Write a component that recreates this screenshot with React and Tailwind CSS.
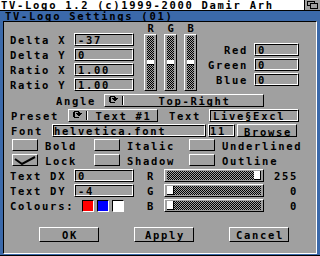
import React from 'react';

// Amiga GadTools-style settings window

const raised = 'border border-t-white border-l-white border-b-black border-r-black';
const recessed = 'border border-t-black border-l-black border-b-white border-r-white';
const checker =
  'bg-[repeating-conic-gradient(#000_0_25%,#a0a0a0_0_50%)] bg-size-[2px_2px]';

const Txt = ({ children, className = '' }) => (
  <div className={`h-[13px] leading-[15px] whitespace-pre shrink-0 ${className}`}>{children}</div>
);

const Field = ({ value, className = '', pad = 'pl-[2px]' }) => (
  <div className={`h-[13px] shrink-0 ${raised} ${className}`}>
    <div className={`h-full ${recessed} leading-[11px] whitespace-pre ${pad}`}>{value}</div>
  </div>
);

const Button = ({ label, className = '' }) => (
  <div className={`${raised} shrink-0 flex justify-center pl-[2px] leading-[15px] ${className}`}>{label}</div>
);

const CycleIcon = () => (
  <svg width="9" height="8" viewBox="0 0 9 8" shapeRendering="crispEdges" className="absolute left-[4px] top-[1px]">
    <rect x="1" y="0" width="5" height="1" fill="#000" />
    <rect x="0" y="1" width="2" height="5" fill="#000" />
    <rect x="1" y="6" width="5" height="1" fill="#000" />
    <rect x="5" y="1" width="2" height="1" fill="#000" />
    <rect x="3" y="2" width="6" height="1" fill="#000" />
    <rect x="4" y="3" width="4" height="1" fill="#000" />
    <rect x="5" y="4" width="2" height="1" fill="#000" />
  </svg>
);

const Cycle = ({ label, className = '' }) => (
  <div className={`${raised} h-[13px] shrink-0 flex ${className}`}>
    <div className="w-[17px] shrink-0 relative">
      <CycleIcon />
    </div>
    <div className="w-[1px] bg-black my-[1px]" />
    <div className="w-[1px] bg-white my-[1px]" />
    <div className="flex-1 text-center pl-[2px] leading-[13px] whitespace-pre">{label}</div>
  </div>
);

const Check = ({ checked }) => (
  <div className={`${raised} w-[26px] h-[12px] shrink-0 relative`}>
    {checked && (
      <svg width="24" height="10" viewBox="0 0 24 10" className="absolute left-0 top-0">
        <polyline points="2,4 9,9 22,2" fill="none" stroke="#000" strokeWidth="2" />
      </svg>
    )}
  </div>
);

const VSlider = () => (
  <div className={`${raised} w-[13px] h-[57px] px-[2px] py-[1px]`}>
    <div className={`h-full ${checker} flex flex-col justify-center`}>
      <div className="h-[5px] bg-white border-b border-black" />
    </div>
  </div>
);

const HSlider = ({ end }) => (
  <div className={`${raised} w-[100px] h-[13px] px-[2px] py-[1px] shrink-0`}>
    <div className={`h-full ${checker} flex ${end ? 'justify-end' : 'justify-start'}`}>
      <div className="w-[7px] bg-white border-r border-b border-black" />
    </div>
  </div>
);

const Swatch = ({ color }) => <div className={`w-[12px] h-[12px] shrink-0 mt-[1px] ${recessed} ${color}`} />;

export default function App() {
  return (
    <div className="w-[320px] h-[256px] flex flex-col bg-[#3b69aa] font-['DejaVu_Sans_Mono',monospace] font-bold text-[10.5px] tracking-[1.7px] text-black overflow-hidden">
      {/* screen bar */}
      <div className="h-[11px] shrink-0 bg-white border-b border-black flex">
        <div className="pl-[1px] leading-[11px] whitespace-pre">TV-Logo 1.2 (c)1999-2000 Damir Arh</div>
        <div className="ml-auto w-[16px] bg-[#a0a0a0] border-l border-black">
          <svg width="15" height="10" viewBox="0 0 15 10" shapeRendering="crispEdges">
            <rect x="2.5" y="1.5" width="7" height="4" fill="#a0a0a0" stroke="#000" />
            <rect x="5.5" y="3.5" width="7" height="5" fill="#a0a0a0" stroke="#000" />
          </svg>
        </div>
      </div>

      {/* window title */}
      <div className="h-[10px] shrink-0 pl-[5px] leading-[10px] whitespace-pre">TV-Logo Settings (01)</div>

      {/* window frame */}
      <div className="flex-1 flex px-[3px] pb-[1px] min-h-0">
        <div className={`flex-1 ${recessed} bg-[#a0a0a0] flex flex-col`}>
          {/* top block */}
          <div className="mt-[1px] h-[69px] flex">
            <div className="ml-[6px] pt-[10px] flex flex-col gap-[2px]">
              {[
                ['Delta X', '-37'],
                ['Delta Y', '0'],
                ['Ratio X', '1.00'],
                ['Ratio Y', '1.00'],
              ].map(([l, v]) => (
                <div key={l} className="flex">
                  <Txt className="w-[64px]">{l}</Txt>
                  <Field className="w-[60px]" value={v} />
                </div>
              ))}
            </div>
            <div className="ml-[10px] flex gap-[7px]">
              {['R', 'G', 'B'].map((c) => (
                <div key={c} className="w-[13px] flex flex-col">
                  <div className="h-[11px] leading-[11px] text-center pl-[2px]">{c}</div>
                  <VSlider />
                </div>
              ))}
            </div>
            <div className="pt-[20px] flex flex-col gap-[2px]">
              {['Red', 'Green', 'Blue'].map((l) => (
                <div key={l} className="flex">
                  <Txt className="w-[51px] text-right">{l}</Txt>
                  <Field className="ml-[6px] w-[45px]" value="0" />
                </div>
              ))}
            </div>
          </div>

          {/* angle */}
          <div className="mt-[2px] flex">
            <Txt className="ml-[52px] w-[48px]">Angle</Txt>
            <Cycle className="w-[160px]" label="Top-Right" />
          </div>

          {/* preset */}
          <div className="mt-[2px] flex">
            <Txt className="ml-[7px] w-[57px]">Preset</Txt>
            <Cycle className="w-[90px]" label="Text #1" />
            <Txt className="ml-[11px] w-[40px]">Text</Txt>
            <Field className="w-[90px]" value="Live§Excl" />
          </div>

          {/* font */}
          <div className="mt-[2px] flex">
            <Txt className="ml-[7px] w-[41px]">Font</Txt>
            <Field className="w-[154px]" value="helvetica.font" pad="pl-0" />
            <Field className="ml-[2px] w-[27px]" value="11" pad="pl-0" />
            <Button className="ml-[2px] w-[60px] h-[13px] leading-[13px]" label="Browse" />
          </div>

          {/* style checkboxes */}
          {[
            [['Bold', false], ['Italic', false], ['Underlined', false]],
            [['Lock', true], ['Shadow', false], ['Outline', false]],
          ].map((row, i) => (
            <div key={i} className="mt-[2px] h-[13px] flex">
              <div className="ml-[8px]">
                <Check checked={row[0][1]} />
              </div>
              <Txt className="ml-[7px] w-[49px]">{row[0][0]}</Txt>
              <Check checked={row[1][1]} />
              <Txt className="ml-[7px] w-[62px]">{row[1][0]}</Txt>
              <Check checked={row[2][1]} />
              <Txt className="ml-[7px]">{row[2][0]}</Txt>
            </div>
          ))}

          {/* text offsets + colour sliders */}
          <div className="mt-[2px] flex">
            <Txt className="ml-[6px] w-[64px]">Text DX</Txt>
            <Field className="w-[60px]" value="0" />
            <Txt className="ml-[13px] w-[17px]">R</Txt>
            <HSlider end />
            <Txt className="w-[34px] text-right">255</Txt>
          </div>
          <div className="mt-[2px] flex">
            <Txt className="ml-[6px] w-[64px]">Text DY</Txt>
            <Field className="w-[60px]" value="-4" />
            <Txt className="ml-[13px] w-[17px]">G</Txt>
            <HSlider />
            <Txt className="w-[34px] text-right">0</Txt>
          </div>
          <div className="mt-[2px] flex">
            <Txt className="ml-[6px] w-[72px]">Colours:</Txt>
            <div className="flex gap-[3px]">
              <Swatch color="bg-[#ff0000]" />
              <Swatch color="bg-[#0000ff]" />
              <Swatch color="bg-white" />
            </div>
            <Txt className="ml-[23px] w-[17px]">B</Txt>
            <HSlider />
            <Txt className="w-[34px] text-right">0</Txt>
          </div>

          {/* buttons */}
          <div className="mt-[15px] flex gap-[35px] pl-[35px]">
            <Button className="w-[60px] h-[15px]" label="OK" />
            <Button className="w-[60px] h-[15px]" label="Apply" />
            <Button className="w-[60px] h-[15px]" label="Cancel" />
          </div>
        </div>
      </div>
      <div className="h-[1px] shrink-0 bg-black" />
    </div>
  );
}
